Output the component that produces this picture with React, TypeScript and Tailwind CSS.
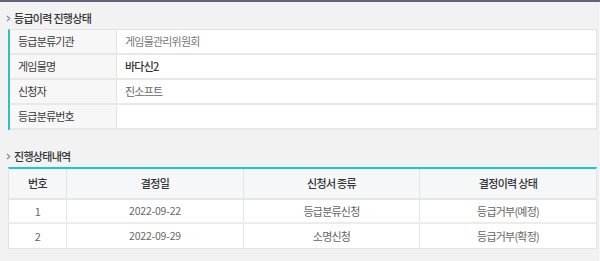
import React from "react";

const font = { fontFamily: '"Noto Sans CJK KR", "Noto Sans", sans-serif' };

function Heading({ children }: { children: React.ReactNode }) {
  return (
    <div className="flex items-center h-[14px] pl-[6px] gap-[3px]">
      <svg width="5" height="7" viewBox="0 0 5 7" className="shrink-0">
        <path d="M1 1 L3.8 3.5 L1 6" fill="none" stroke="#8a84a8" strokeWidth="1.1" />
      </svg>
      <span className="text-[11px] font-medium text-[#333] tracking-[-0.7px] leading-none">{children}</span>
    </div>
  );
}

const info: { label: string; value: string; cls: string }[] = [
  { label: "등급분류기관", value: "게임물관리위원회", cls: "text-[#777]" },
  { label: "게임물명", value: "바다신2", cls: "text-[#333] font-medium" },
  { label: "신청자", value: "진소프트", cls: "text-[#666]" },
  { label: "등급분류번호", value: "", cls: "" },
];

const rows = [
  ["1", "2022-09-22", "등급분류신청", "등급거부(예정)"],
  ["2", "2022-09-29", "소명신청", "등급거부(확정)"],
];

export default function App() {
  return (
    <div style={font} className="w-[600px] h-[261px] bg-[#f2f2f2] border-t-[2px] border-[#62627e] flex overflow-hidden">
      <div className="w-[598px] flex flex-col">
        <div className="h-[9px]" />
        <Heading>등급이력 진행상태</Heading>
        <div className="h-[4px]" />
        <div className="ml-[8px] w-[589px] border-l-[2px] border-l-[#2bc1c1] border-t border-r border-[#e3e3e3] bg-white">
          {info.map((r, i) => (
            <div key={i} className="flex h-[25px] border-b-2 border-[#e8e8e8]">
              <div className="w-[107px] shrink-0 bg-[#f7f7f7] border-r border-[#e3e3e3] flex items-center pl-[8px] text-[11px] text-[#3a3a3a] tracking-[-0.8px]">
                {r.label}
              </div>
              <div className={"flex items-center pl-[8px] text-[11px] tracking-[-0.8px] " + r.cls}>{r.value}</div>
            </div>
          ))}
        </div>
        <div className="h-[19px]" />
        <Heading>진행상태내역</Heading>
        <div className="h-[4px]" />
        <div className="ml-[8px] w-[589px] border-t-[2px] border-t-[#1ec8c4] border-l border-r border-b border-[#e3e3e3] bg-white text-[11px]">
          <div className="grid grid-cols-[58px_177px_176px_1fr] h-[31px] bg-[#f6f7f9] border-b-2 border-[#e6e6e6] text-[#333] font-medium tracking-[-0.7px]">
            {["번호", "결정일", "신청서 종류", "결정이력 상태"].map((h, i) => (
              <div key={i} className={"flex items-center justify-center " + (i < 3 ? "border-r border-[#e3e3e3]" : "")}>{h}</div>
            ))}
          </div>
          {rows.map((r, ri) => (
            <div key={ri} className={"grid grid-cols-[58px_177px_176px_1fr] h-[24px] text-[#666] " + (ri === 0 ? "border-b-2 border-[#ececec]" : "")}>
              {r.map((c, i) => (
                <div key={i} className={"flex items-center justify-center " + (i === 1 ? "text-[10.5px] tracking-[-0.2px] " : "tracking-[-0.8px] ") + (i < 3 ? "border-r border-[#e6e6e6]" : "")}>{c}</div>
              ))}
            </div>
          ))}
        </div>
      </div>
      <div className="w-[2px] bg-[#f8f8f8] border-l border-[#ececec]" />
    </div>
  );
}
